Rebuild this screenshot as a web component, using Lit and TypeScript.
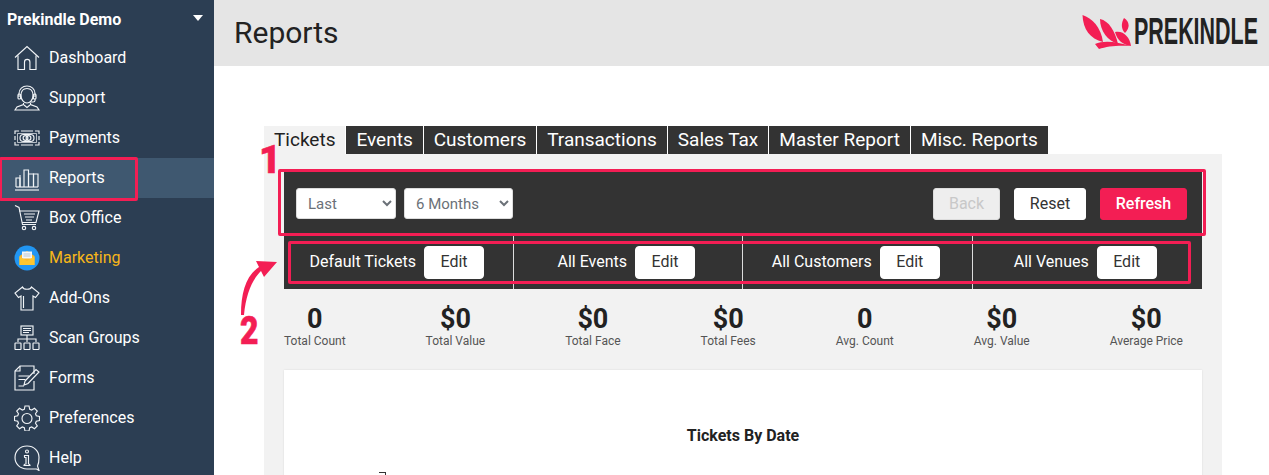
import { LitElement, css, html, svg } from 'lit';
import { customElement } from 'lit/decorators.js';

const icons: Record<string, unknown> = {
  home: svg`<path d="M1 12.5 13 1.5l12 11"/><path d="M4 10.5V24.500h6.500V17a2.700 2.700 0 0 1 5.400 0v7.500H22V10.500"/>`,
  support: svg`<path d="M7 10.500C7 6 9.500 3.500 13 3.500s6 2.500 6 7c0 4.500-3 7.500-6 7.500s-6-3-6-7.500Z"/><path d="M5 12V8.500C5 4 8.500 1 13 1s8 3 8 7.500V12"/><rect x="4" y="9" width="2.600" height="5" rx="1"/><rect x="19.400" y="9" width="2.600" height="5" rx="1"/><path d="M21 14v1.500c0 1-1 1.500-2 1.500h-3"/><path d="M9.500 18v1.500L3 22l-2 3h24l-2-3-6.500-2.500V18"/><path d="M10 20l3 2.500 3-2.500"/>`,
  payments: svg`<path d="M1 9V6h4M21 6h4v3M1 17v3h4M21 20h4v-3"/><path d="M7 6h12M7 20h12M1 11v4M25 11v4"/><path d="M3.500 8.500h19v9h-19Z" stroke-width=".7"/><rect x="6" y="9.500" width="14" height="7" rx="3.500"/><circle cx="11.500" cy="13" r="2.400"/><circle cx="14.500" cy="13" r="2.400"/>`,
  reports: svg`<path d="M1 25h24"/><path d="M2 22V13h4v9"/><path d="M6 22V10"/><path d="M10 22V5h4.500v17"/><path d="M14.500 22V9h5v13"/><path d="M19.500 22V9H24v13"/><path d="M2 22h22"/>`,
  cart: svg`<path d="M1 .5l4 2 3.500 17H22"/><path d="M5 6h20l-3 11.500H8"/><path d="M10 9h11M11 12h9M12 15h6"/><circle cx="10" cy="23" r="1.700"/><circle cx="20" cy="23" r="1.700"/>`,
  shirt: svg`<path d="M8.500 2 1 8l3.500 4.500L7 11v14h12V11l2.500 1.500L25 8l-7.500-6c-1 3-8 3-9 0Z"/><path d="M9.500 11v12"/>`,
  groups: svg`<rect x="7" y="1" width="12" height="9"/><path d="M9 3.500h8M9 5.500h8M9 7.500h6"/><path d="M13 10v4M4 17v-3h18v3M13 14v3"/><rect x="1" y="18" width="6" height="6.500" rx=".5"/><rect x="10" y="18" width="6" height="6.500" rx=".5"/><rect x="19" y="18" width="6" height="6.500" rx=".5"/>`,
  forms: svg`<path d="M20 9V1H6L1 6v19h19V16"/><path d="M6 1v5H1"/><path d="M11 16 22 4.500l3 2.500-11 11.500-4 1.500Z"/><path d="M4.500 11H15M4.500 14.500h7M4.500 21H10"/>`,
  gear: svg`<path d="M11 1h4l.7 3.300 2 .8L20.500 3.300 23.300 6l-1.800 2.800.8 2L25.500 11.500v4l-3.200.7-.8 2 1.800 2.800-2.800 2.700-2.800-1.800-2 .8L15 26h-4l-.7-3.300-2-.8-2.800 1.800L2.700 21l1.800-2.800-.8-2L.5 15.500v-4l3.200-.7.8-2L2.700 6l2.800-2.700 2.800 1.800 2-.8Z"/><circle cx="13" cy="13.500" r="5"/>`,
  help: svg`<path d="M13 1C6 1 1 6 1 12.500S6 24 13 24h9.500l2.500 1.500-1.500-4.500C24.500 19 25 16 25 12.500 25 6 20 1 13 1Z"/><circle cx="13" cy="6.500" r="1.500"/><path d="M10.500 10.500H14.500V19c1 0 1.500.5 1.500 1.500h-6c0-1 .5-1.500 1.500-1.500h.5v-6.500h-1c-.7 0-.5-1-.5-2Z"/>`,
};

const nav = [
  { label: 'Dashboard', icon: 'home' },
  { label: 'Support', icon: 'support' },
  { label: 'Payments', icon: 'payments' },
  { label: 'Reports', icon: 'reports', active: true },
  { label: 'Box Office', icon: 'cart' },
  { label: 'Marketing', icon: 'marketing', accent: true },
  { label: 'Add-Ons', icon: 'shirt' },
  { label: 'Scan Groups', icon: 'groups' },
  { label: 'Forms', icon: 'forms' },
  { label: 'Preferences', icon: 'gear' },
  { label: 'Help', icon: 'help' },
];

const tabs = ['Tickets', 'Events', 'Customers', 'Transactions', 'Sales Tax', 'Master Report', 'Misc. Reports'];
const filters = ['Default Tickets', 'All Events', 'All Customers', 'All Venues'];
const stats = [
  ['0', 'Total Count'],
  ['$0', 'Total Value'],
  ['$0', 'Total Face'],
  ['$0', 'Total Fees'],
  ['0', 'Avg. Count'],
  ['$0', 'Avg. Value'],
  ['$0', 'Average Price'],
];

const marketingIcon = svg`
  <circle cx="13" cy="13" r="12.500" fill="#2196f3" stroke="none"/>
  <path d="M5.500 11 13 6l7.500 5v9h-15Z" fill="#f9b72b" stroke="none"/>
  <rect x="8" y="6.500" width="10" height="7" fill="#f2f6fa" stroke="none"/>
  <path d="M9.500 9h7M9.500 11h7" stroke="#b9c6d2" stroke-width="1"/>
  <path d="M5.500 11.500 13 16l7.500-4.500V20h-15Z" fill="#fdc62f" stroke="none"/>`;

@customElement('app-root')
export class AppRoot extends LitElement {
  static styles = css`
    :host {
      display: block;
      height: 475px;
      overflow: hidden;
      font-family: Roboto, sans-serif;
      background: #fff;
    }

    .layout {
      display: grid;
      grid-template-columns: 214px 1fr;
      height: 475px;
      position: relative;
      overflow: hidden;
    }

    .sidebar {
      background: #2c3e53;
      color: #fff;
    }

    .account {
      display: flex;
      align-items: center;
      justify-content: space-between;
      height: 38px;
      padding: 0 11px 0 7px;
      font-size: 16px;
      font-weight: 700;
    }

    .caret {
      width: 0;
      height: 0;
      border-left: 5.5px solid transparent;
      border-right: 5.5px solid transparent;
      border-top: 6px solid #fff;
      margin-bottom: 3px;
    }

    .nav-item {
      display: flex;
      align-items: center;
      gap: 9px;
      height: 40px;
      padding-left: 14px;
      font-size: 16px;
    }

    .nav-item span {
      padding-bottom: 2px;
    }

    .nav-item.active {
      background: #3f5870;
    }

    .nav-item.accent {
      color: #f6b61a;
    }

    .nav-item svg {
      width: 26px;
      height: 26px;
      flex: none;
      fill: none;
      stroke: #f1f4f7;
      stroke-width: 1.15;
    }

    .main {
      min-width: 0;
    }

    .topbar {
      display: flex;
      align-items: center;
      justify-content: space-between;
      height: 66px;
      padding: 0 11px 0 20px;
      background: #e5e5e5;
    }

    h1 {
      margin: -1px 0 0;
      font-size: 30px;
      font-weight: 400;
      color: #222;
    }

    .logo {
      display: flex;
      align-items: center;
      gap: 3px;
      margin-top: -2px;
    }

    .logo svg {
      width: 49px;
      height: 34px;
      fill: #f31e54;
    }

    .wordmark {
      width: 124px;
      font-family: 'Liberation Sans', sans-serif;
      font-size: 37px;
      line-height: 34px;
      font-weight: 700;
      color: #222;
      transform: scaleX(0.58);
      transform-origin: left center;
      white-space: nowrap;
    }

    .page {
      margin: 60px 47px 0 50px;
    }

    .tabs {
      display: flex;
      gap: 1px;
      height: 28px;
    }

    .tab {
      padding: 0 10px;
      font-size: 19px;
      line-height: 27px;
      background: #333;
      color: #fff;
    }

    .tab.active {
      background: #f2f2f2;
      color: #222;
    }

    .panel {
      background: #f2f2f2;
      padding: 18px 20px 0;
      height: 400px;
    }

    .toolbar {
      display: flex;
      align-items: center;
      gap: 8px;
      height: 63px;
      padding: 0 15px 0 12px;
      background: #333;
    }

    select {
      height: 31px;
      padding: 0 4px 0 7px;
      border: 1px solid #ddd;
      border-radius: 3px;
      background: #fff;
      color: #6b7178;
      font-family: Roboto, sans-serif;
      font-size: 15px;
    }

    .range {
      width: 100px;
    }

    .months {
      width: 109px;
    }

    .actions {
      display: flex;
      gap: 14px;
      margin-left: auto;
    }

    button {
      height: 32px;
      padding: 0;
      border: 1px solid #fff;
      border-radius: 3px;
      background: #fff;
      color: #333;
      font-family: Roboto, sans-serif;
      font-size: 16px;
    }

    .back {
      width: 67px;
      background: #eee;
      border-color: #ddd;
      color: #c8c8c8;
    }

    .reset {
      width: 72px;
    }

    .refresh {
      width: 87px;
      background: #f31e54;
      border-color: #f31e54;
      color: #fff;
      font-weight: 500;
    }

    .filters {
      display: grid;
      grid-template-columns: repeat(4, 1fr);
      height: 54px;
      background: #333;
    }

    .filter {
      display: flex;
      align-items: center;
      justify-content: center;
      gap: 8px;
      padding-right: 3px;
      color: #fff;
      font-size: 16px;
      border-right: 1px solid #ddd;
    }

    .filter:last-child {
      border-right-color: transparent;
    }

    .filter span {
      padding-bottom: 2px;
    }

    .filter button {
      width: 60px;
      height: 33px;
      padding-bottom: 2px;
      border-radius: 4px;
    }

    .stats {
      display: flex;
      justify-content: space-between;
      padding: 15px 19px 0 0;
      height: 66px;
    }

    .stat {
      text-align: center;
      color: #222;
    }

    .stat b {
      display: block;
      font-size: 27px;
      line-height: 30px;
      font-weight: 700;
    }

    .stat span {
      display: block;
      font-size: 12px;
      line-height: 14px;
      color: #555;
    }

    .card {
      height: 200px;
      padding-top: 57px;
      background: #fff;
      box-shadow: 0 0 2px rgba(0, 0, 0, 0.1);
    }

    .card h2 {
      margin: 0;
      font-size: 16px;
      line-height: 17px;
      font-weight: 700;
      color: #222;
      text-align: center;
    }

    .axis-tick {
      width: 6px;
      height: 4px;
      margin: 28px 0 0 95px;
      border-top: 1px solid #333;
      border-right: 1px solid #333;
    }

    .mark {
      position: absolute;
      border: 3px solid #f31e54;
      border-radius: 2px;
      box-sizing: border-box;
    }

    .mark-reports {
      left: -1px;
      top: 157px;
      width: 139px;
      height: 44px;
    }

    .mark-toolbar {
      left: 278px;
      top: 169px;
      width: 928px;
      height: 67px;
    }

    .mark-filters {
      left: 288px;
      top: 241px;
      width: 903px;
      height: 43px;
    }

    .digit {
      position: absolute;
      font-size: 38px;
      line-height: 38px;
      font-weight: 900;
      color: #f31e54;
      -webkit-text-stroke: 0.6px #f31e54;
    }

    .digit-1 {
      left: 259px;
      top: 141px;
    }

    .digit-2 {
      left: 240px;
      top: 312px;
      transform: scaleX(0.84);
      transform-origin: left center;
    }

    .arrow {
      position: absolute;
      left: 238px;
      top: 258px;
      width: 42px;
      height: 60px;
      fill: #f31e54;
    }
  `;

  render() {
    return html`
      <div class="layout">
        <aside class="sidebar">
          <div class="account"><span>Prekindle Demo</span><i class="caret"></i></div>
          ${nav.map(
            (item) => html`
              <div class="nav-item ${item.active ? 'active' : ''} ${item.accent ? 'accent' : ''}">
                <svg viewBox="0 0 26 26">${item.icon === 'marketing' ? marketingIcon : icons[item.icon]}</svg>
                <span>${item.label}</span>
              </div>
            `,
          )}
        </aside>
        <div class="main">
          <header class="topbar">
            <h1>Reports</h1>
            <div class="logo">
              <svg viewBox="0 0 49 34">
                <path d="M.5 0C10 3 19 12 21 27 8 24 1 14 .5 0Z" />
                <path d="M18 4c9 2 15 12 18 25-10-3-18-13-18-25Z" />
                <path d="M42 3c6 4 6 10 1 15-4-4-4-10-1-15Z" />
                <path d="M33 17c8-2 15 5 16 14-8-1-14-6-16-14Z" />
                <path d="M13 29c9-4 23-2 35 2-10-1-23 0-31 3Z" />
              </svg>
              <div class="wordmark">PREKINDLE</div>
            </div>
          </header>
          <div class="page">
            <div class="tabs">
              ${tabs.map((tab, i) => html`<div class="tab ${i === 0 ? 'active' : ''}">${tab}</div>`)}
            </div>
            <div class="panel">
              <div class="toolbar">
                <select class="range"><option>Last</option></select>
                <select class="months"><option>6 Months</option></select>
                <div class="actions">
                  <button class="back">Back</button>
                  <button class="reset">Reset</button>
                  <button class="refresh">Refresh</button>
                </div>
              </div>
              <div class="filters">
                ${filters.map((f) => html`<div class="filter"><span>${f}</span><button>Edit</button></div>`)}
              </div>
              <div class="stats">
                ${stats.map(([value, label]) => html`<div class="stat"><b>${value}</b><span>${label}</span></div>`)}
              </div>
              <div class="card">
                <h2>Tickets By Date</h2>
                <div class="axis-tick"></div>
              </div>
            </div>
          </div>
        </div>
        <div class="mark mark-reports"></div>
        <div class="mark mark-toolbar"></div>
        <div class="mark mark-filters"></div>
        <div class="digit digit-1">1</div>
        <div class="digit digit-2">2</div>
        <svg class="arrow" viewBox="0 0 42 60">
          <path d="M3 57C3 34 8 18 21 9l-3-6 21 1-13 15-3-6C14 22 8 36 6 57Z" />
        </svg>
      </div>
    `;
  }
}
